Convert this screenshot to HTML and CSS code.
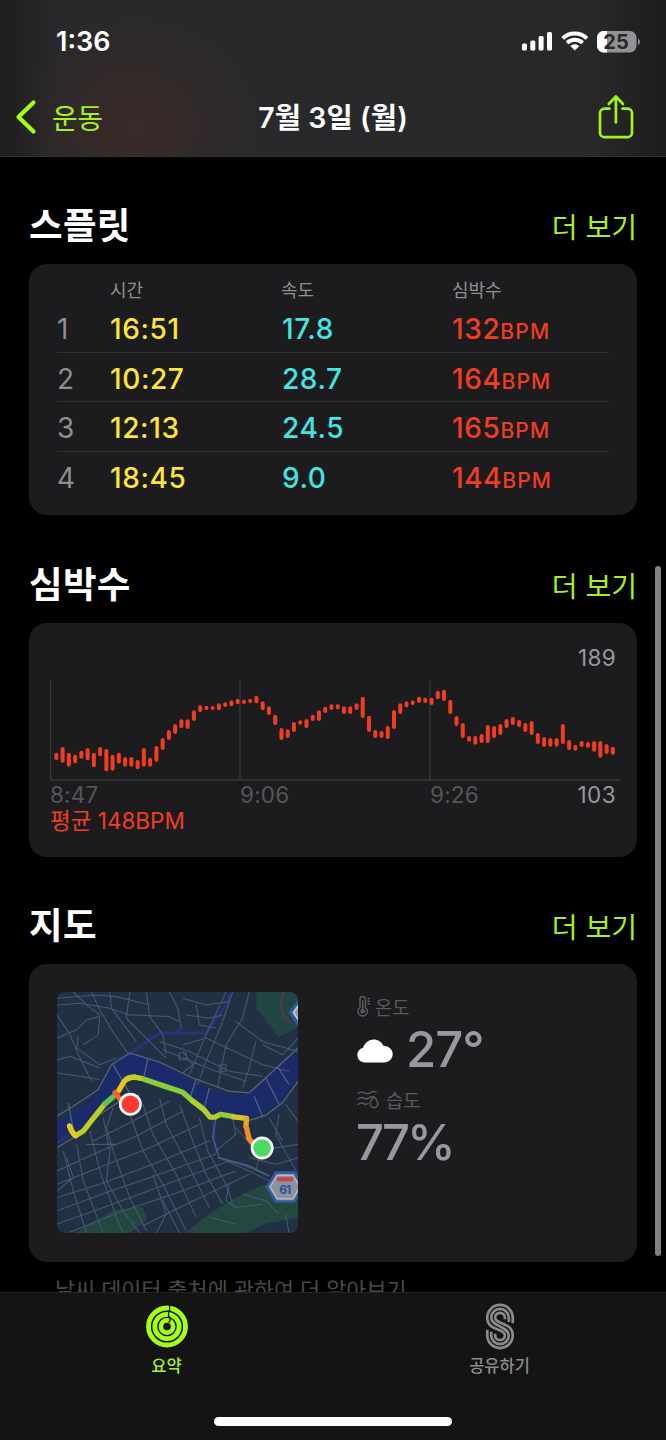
FILE: index.html
```
<!DOCTYPE html>
<html lang="ko">
<head>
<meta charset="utf-8">
<title>운동 요약</title>
<link rel="stylesheet" href="styles.css">
</head>
<body>
<div class="phone">
  <header class="top">
    <div class="status">
      <span class="clock">1:36</span>
      <svg class="status-icons" width="122" height="24" viewBox="0 0 122 24">
        <g fill="#fff">
          <rect x="2" y="14.500" width="5" height="7" rx="1.500"/>
          <rect x="10.300" y="11.500" width="5" height="10" rx="1.500"/>
          <rect x="18.600" y="7" width="5" height="14.500" rx="1.500"/>
          <rect x="27" y="3" width="5" height="18.500" rx="1.500"/>
          <path d="M54.800 21.500l-4.500-4.500a6.400 6.400 0 0 1 9 0z"/>
        </g>
        <g fill="none" stroke="#fff" stroke-width="3.900">
          <path d="M42.700 9.300a17.500 17.500 0 0 1 24.200 0"/>
          <path d="M47 13.800a11.300 11.300 0 0 1 15.600 0"/>
        </g>
        <rect x="77" y="2" width="39.500" height="21.500" rx="6.500" fill="#939395"/>
        <path d="M87 2h-3.500a6.500 6.500 0 0 0-6.500 6.500v8.500a6.500 6.500 0 0 0 6.500 6.500h3.500z" fill="#fff"/>
        <path d="M118 9.300q4 3.500 0 7z" fill="#939395"/>
        <text x="96" y="20" class="battery">25</text>
      </svg>
    </div>
    <nav class="nav">
      <a class="back">
        <svg width="22" height="36" viewBox="0 0 22 36"><path d="M18.500 3.500L3.500 18l15 14.500" fill="none" stroke="#a6ff12" stroke-width="4.200" stroke-linecap="round" stroke-linejoin="round"/></svg>
        <span>운동</span>
      </a>
      <h1>7월 3일 (월)</h1>
      <svg class="share" width="36" height="46" viewBox="0 0 36 46" fill="none" stroke="#a6f11c" stroke-width="2.700" stroke-linecap="round" stroke-linejoin="round">
        <path d="M11.500 14.700H6.500a4.500 4.500 0 0 0-4.500 4.500v19.500a4.500 4.500 0 0 0 4.500 4.500h23a4.500 4.500 0 0 0 4.500-4.500V19.200a4.500 4.500 0 0 0-4.500-4.500H24.500M17.900 28.500V3M10.800 10L17.900 2.500 25 10"/>
      </svg>
    </nav>
  </header>

  <main class="content">
    <section>
      <div class="head"><h2>스플릿</h2><a>더 보기</a></div>
      <div class="card splits">
        <div class="row labels"><i></i><span>시간</span><span>속도</span><span>심박수</span></div>
        <div class="row"><i>1</i><span class="time">16:51</span><span class="speed">17.8</span><span class="heart">132<small>BPM</small></span></div>
        <div class="row"><i>2</i><span class="time">10:27</span><span class="speed">28.7</span><span class="heart">164<small>BPM</small></span></div>
        <div class="row"><i>3</i><span class="time">12:13</span><span class="speed">24.5</span><span class="heart">165<small>BPM</small></span></div>
        <div class="row"><i>4</i><span class="time">18:45</span><span class="speed">9.0</span><span class="heart">144<small>BPM</small></span></div>
      </div>
    </section>

    <section>
      <div class="head second"><h2>심박수</h2><a>더 보기</a></div>
      <div class="card pulse">
        <div class="max">189</div>
        <svg class="chart" width="570" height="100" viewBox="30 33 1710 300">
          <path d="M31.500 33V330M600 33V330M1170 33V330M30 330H1740" stroke="#38383b" stroke-width="4" fill="none"/>
          <path id="bars" stroke="#f23d20" stroke-width="12" stroke-linecap="round" fill="none"/>
        </svg>
        <div class="axis"><span>8:47</span><span>9:06</span><span>9:26</span><b>103</b></div>
        <div class="average">평균 148BPM</div>
      </div>
    </section>

    <section>
      <div class="head"><h2>지도</h2><a>더 보기</a></div>
      <div class="card place">
        <svg class="map" width="241" height="241" viewBox="21 21 726 726">
          <rect x="21" y="21" width="726" height="726" fill="#223044"/>
          <path d="M622 21V70L688 158 747 125V21z" fill="#214744"/>
          <path d="M75 747L190 678 280 668 292 708 240 747z" fill="#24483f"/>
          <path d="M405 747L480 690 560 640 640 603 747 590V700L650 720 590 747z" fill="#24483f"/>
          <path d="M21 410L70 385 140 330 185 250 225 215 255 207 330 235 400 275 480 315 540 330 600 330 640 300 700 235 747 205V280L700 345 650 385 600 402 540 395 480 390 420 345 380 325 300 290 240 285 205 320 160 365 100 440 21 470z" fill="#1b2a6b"/>
          <path d="M235 210L290 170 330 145H470L530 60 545 21M380 145L400 130M490 400L500 510M21 475L60 450" fill="none" stroke="#22357b" stroke-width="9"/>
          <g fill="none" stroke="#465875" stroke-width="3.200">
            <path d="M21 60L90 55 180 70 240 90 360 95 390 110M21 90L60 150 90 220 125 290M21 160L80 135 110 105 150 95M85 155L80 190 150 240 200 220M70 21L110 60 150 90 145 150 100 180M125 21L150 75 195 150 235 205M180 21L185 70 260 170M240 21L230 100 280 150 350 220M21 225L60 215 150 250M21 265L90 275 150 285M290 21L300 95 340 150 350 210M360 21L385 70 395 130M21 40L140 30 200 35 300 60"/>
            <path d="M530 21L470 150 420 270M550 21L520 110 470 230 445 300M600 21L580 100 530 180 505 310M400 180L470 160 640 240 720 260M330 170L420 200 540 260 640 275M340 195L500 260 590 290M620 170L600 250 580 310M560 110L640 170 747 200M400 40L470 60 540 50M410 90L480 100 520 90M400 200L430 240 400 265M440 60L450 120 500 130M640 180L700 210 747 160M510 240h20v20h-20zM390 205h20v20h-20z"/>
            <path d="M230 360L280 500 340 600 410 740M280 360L310 450 380 570 440 700M330 340L350 420 420 550 480 670M390 360L430 470 470 570 520 660M190 370L170 430 190 500 240 640 290 740M160 400L180 500 170 590 220 680 270 747M120 440L150 560 200 700 220 747M80 480L100 590 160 747M40 500L70 620 110 747M450 400L475 500 530 600 550 660"/>
            <path d="M21 560L130 510 270 450 400 380M21 600L160 545 300 490 450 420M21 640L150 600 310 540 480 470M21 680L170 625 330 570 500 510M21 720L190 660 350 600 540 530M60 745L220 680 370 630 560 560M280 725L390 670 600 570M130 470L230 420 360 350M110 480L200 480M50 520L70 580 21 620M340 650L390 747M310 570L350 690 320 747"/>
            <path d="M500 500L560 450 550 400M505 520L590 545 660 575M510 520L600 560 660 590M560 430L620 500 747 480M600 520L680 540 747 520M640 480L620 560M690 390L680 450 747 570M660 400L700 470M710 360L747 410M540 600L530 650 560 670 640 660M580 630L650 650 690 690M710 690L720 747M480 700L560 720"/>
          </g>
          <g fill="none" stroke="#50617f" stroke-width="4">
            <path d="M21 395L70 365 145 315 185 240 240 205 330 232 430 280 540 320 600 325 660 270 747 190"/>
            <path d="M190 240L260 360M295 220L280 290M440 285L420 345M480 310L465 370M615 335L640 395M650 280L690 360M685 245L720 300M55 355L75 460M21 490L70 460 150 390 210 350 270 330"/>
            <path d="M500 400L490 460 510 520 600 545 660 575M600 408L650 392 700 355 747 290"/>
          </g>
          <path d="M705 21Q690 50 700 80T725 110" fill="none" stroke="#55364e" stroke-width="7"/>
          <g fill="none" stroke-width="16" stroke-linecap="round" stroke-linejoin="round">
            <path d="M59 425Q65 445 77 454L100 440 130 402 165 358" stroke="#bdcf27"/>
            <path d="M59 425Q65 445 77 454" stroke="#e0ca22"/>
            <path d="M165 358L190 337" stroke="#5cc64e"/>
            <path d="M207 318L222 292Q232 277 255 277" stroke="#e7c51f"/>
            <path d="M232 283Q245 274 275 281" stroke="#c3cf28"/>
            <path d="M283 284L340 303 400 323 430 350 455 368" stroke="#8bcc39"/>
            <path d="M430 350L463 375 482 398 497 398 512 390" stroke="#b3cf2c"/>
            <path d="M514 390L550 396" stroke="#91cd39"/>
            <path d="M552 397L592 402" stroke="#d3c82b"/>
            <path d="M592 404L590 426" stroke="#eba522"/>
            <path d="M592 430L599 462 612 478" stroke="#f38d24"/>
            <path d="M196 324L214 348" stroke="#ef6526"/>
          </g>
          <circle cx="242" cy="359" r="30.500" fill="#ff3b30" stroke="#fff" stroke-width="8"/>
          <circle cx="639" cy="491" r="30.500" fill="#4cd964" stroke="#fff" stroke-width="8"/>
          <path d="M654 608L680 565H736L762 608 736 652H680z" fill="#8c919e" stroke="#325b9f" stroke-width="8" stroke-linejoin="round"/>
          <path d="M664 608L685 573H732L752 608 732 644H685z" fill="none" stroke="#c3c9d4" stroke-width="3"/>
          <rect x="684" y="579" width="48" height="12" rx="3" fill="#c9424a"/>
          <text x="707" y="629" class="route">61</text>
          <path d="M751 49L725 83 751 121" fill="#929daf" stroke="#325b9f" stroke-width="11"/>
          <path d="M751 57L733 83 751 110" fill="none" stroke="#d2d9e4" stroke-width="4"/>
        </svg>
        <div class="weather">
          <div class="metric-label">
            <svg width="14" height="22" viewBox="0 0 14 22" fill="none" stroke="#59595e" stroke-width="1.500">
              <path d="M3 12.500V4.200a2.700 2.700 0 0 1 5.400 0v8.300a4.700 4.700 0 1 1-5.400 0z"/><circle cx="5.700" cy="16.300" r="2.400" fill="#59595e" stroke="none"/><path d="M5.700 5v11M10.500 3.500H13M10.500 6.300H13M10.500 9.100H13"/>
            </svg>
            <span>온도</span>
          </div>
          <div class="value temp">
            <svg width="36" height="24" viewBox="0 0 36 24"><path d="M8 23.500a7.500 7.500 0 0 1-1.900-14.800C8 3.500 12 .5 16.800.5c4.200 0 7.800 2.400 9.600 6.200C31.500 6.600 35.700 10.300 35.700 15c0 4.800-3.700 8.500-8.500 8.500z" fill="#fff"/></svg>
            <span>27°</span>
          </div>
          <div class="metric-label humid">
            <svg width="22" height="19" viewBox="0 0 22 19" fill="none" stroke="#59595e" stroke-width="1.500" stroke-linecap="round" stroke-linejoin="round">
              <path d="M1 3.500q3-2.500 6-.8t6 .4q3-2.800 6-.8M1 9q3-2.500 5.500-1T12 8q1.500-1.300 3-1.600M1 14.500q3-2.500 5.500-1T11 13.500M17 6.500q3.800 4.700 3.800 7.300a3.800 3.800 0 0 1-7.600 0q0-2.600 3.800-7.300z"/>
            </svg>
            <span>습도</span>
          </div>
          <div class="value percent">77%</div>
        </div>
      </div>
      <p class="source">날씨 데이터 출처에 관하여 더 알아보기</p>
    </section>
    <div class="scrollbar"></div>
  </main>

  <footer class="tabs">
    <div class="tab-row">
      <a class="tab active">
        <svg width="42" height="46" viewBox="0 0 42 46">
          <g fill="none" stroke="#a6ff12">
            <circle cx="21" cy="23" r="18.500" stroke-width="4.800"/>
            <circle cx="21" cy="23" r="12.200" stroke-width="4.800"/>
            <circle cx="21" cy="23" r="6.100" stroke-width="4.600"/>
          </g>
          <path d="M23.600 1V7L22.600 8V12.500L24 14V17.500L22.500 19" fill="none" stroke="#141414" stroke-width="1.300"/>
        </svg>
        <span>요약</span>
      </a>
      <a class="tab">
        <svg width="30" height="48" viewBox="132 36 90 144" fill="none" stroke="#8b8b8d" stroke-width="8.300">
          <path d="M216 98V81A39 39 0 0 0 138 81C138 122 192 114 192 135A15 15 0 0 1 162 135V130"/>
          <path d="M204 94V81A27 27 0 0 0 150 81C150 108 204 108 204 135A27 27 0 0 1 150 135V124"/>
          <path d="M192 86V81A15 15 0 0 0 162 81C162 102 216 94 216 135A39 39 0 0 1 138 135V118"/>
        </svg>
        <span>공유하기</span>
      </a>
    </div>
    <div class="home"></div>
  </footer>
</div>
<script src="chart.js"></script>
</body>
</html>
```
FILE: chart.js
```
// Low and high reading of each heart rate sample, in chart units.
const samples = [
  [248,270],[231,278],[248,290],[254,280],[242,266],[234,271],[248,292],[231,259],[237,304],[254,302],
  [248,281],[261,290],[261,290],[270,298],[234,290],[263,290],[228,275],[204,240],[180,210],[162,192],
  [148,174],[148,177],[121,153],[106,126],[107,120],[108,120],[100,121],[97,111],[91,109],[86,103],
  [89,102],[86,99],[77,100],[94,121],[109,135],[134,165],[174,210],[178,204],[156,186],[151,164],
  [147,174],[134,153],[121,153],[110,129],[103,120],[103,118],[109,132],[109,132],[100,120],[80,144],
  [137,186],[180,204],[183,204],[168,207],[120,177],[100,132],[94,112],[91,105],[80,99],[83,99],
  [83,105],[62,88],[59,93],[89,132],[138,168],[159,204],[198,215],[198,224],[192,219],[165,219],
  [168,204],[162,195],[147,174],[141,165],[150,171],[159,186],[153,195],[189,222],[201,231],[204,230],
  [204,230],[162,222],[210,240],[225,242],[213,231],[216,233],[213,245],[213,263],[222,252],[230,254]
];
const step = 18.76;
document.getElementById('bars').setAttribute('d', samples
  .map(([top, bottom], i) => `M${(49 + i * step).toFixed(1)} ${top + 6}V${bottom - 6}`)
  .join(''));
```
FILE: styles.css
```
* { box-sizing: border-box; }
body {
  margin: 0;
  background: #000;
  color: #fff;
  font-family: Inter, "Noto Sans CJK KR", sans-serif;
}
h1, h2, p { margin: 0; }
i { font-style: normal; }
.phone {
  width: 666px;
  height: 1440px;
  display: flex;
  flex-direction: column;
  overflow: hidden;
}
.top {
  height: 157px;
  flex: none;
  background:
    radial-gradient(ellipse 125px 110px at 135px 125px, rgba(70, 42, 38, .6), transparent),
    linear-gradient(90deg, #1e1e1f, #29292b 9%, #29292b 88%, #1d1d1e);
  border-bottom: 1px solid #323234;
}
.status {
  height: 82px;
  padding: 0 26px 0 56px;
  display: flex;
  align-items: center;
  justify-content: space-between;
}
.clock { font-size: 27px; font-weight: 600; letter-spacing: 0; }
.status-icons { margin-right: -2px; }
.battery { font: 700 20px Inter, sans-serif; fill: #29292b; text-anchor: middle; }
.nav {
  height: 70px;
  padding: 0 32px 0 15px;
  display: grid;
  grid-template-columns: 1fr auto 1fr;
  align-items: center;
}
.back { display: flex; align-items: center; gap: 15px; color: #a6f11c; font-size: 28px; letter-spacing: -.5px; padding-bottom: 1px; }
.nav h1 { font-size: 28.500px; font-weight: 600; letter-spacing: .1px; padding: 0 0 3px 17px; }
.share { justify-self: end; }

.content {
  flex: 1;
  min-height: 0;
  position: relative;
  overflow: hidden;
  padding: 0 29px;
}
.head {
  height: 107px;
  padding-bottom: 11px;
  display: flex;
  align-items: flex-end;
  justify-content: space-between;
}
.head.second { height: 108px; }
.head h2 { font-size: 36.500px; font-weight: 700; line-height: 54px; letter-spacing: .3px; }
.head a { font-size: 28px; line-height: 50px; color: #a6f11c; }
.card { background: #1c1c1e; border-radius: 18px; }

.splits { height: 251px; padding: 12px 28px 0; }
.row {
  height: 49.700px;
  padding-top: 3px;
  display: grid;
  grid-template-columns: 53px 171px 171px 1fr;
  align-items: center;
  font-size: 28px;
  border-bottom: 1.500px solid #303032;
}
.row:last-child { border: 0; }
.labels { height: 27px; padding: 0 0 3px; border: 0; font-size: 18px; color: #8e8e93; }
.row i { color: #8e8e93; }
.time { color: #ffe534; }
.speed { color: #41e5e1; }
.heart { color: #f23d20; }
.row:not(.labels) span { font-weight: 500; letter-spacing: .6px; }
.row .speed { padding-left: 1px; }
.row.labels .speed { padding-left: 0; }
.row small { font-size: 21px; letter-spacing: 1.200px; }

.pulse { height: 234px; padding: 20px 18px 0 21px; }
.max { height: 38px; font-size: 22.500px; line-height: 30px; text-align: right; padding-right: 3px; letter-spacing: .3px; color: #98989e; }
.chart { display: block; }
.axis {
  height: 26px;
  display: grid;
  grid-template-columns: 190px 190px 1fr auto;
  align-items: center;
  font-size: 22.500px;
  letter-spacing: .2px;
  color: #55555a;
  padding-right: 3px;
}
.axis b { font-weight: 400; letter-spacing: .4px; color: #98989e; }
.average { font-size: 22.500px; line-height: 28px; color: #f23d20; }

.place { height: 298px; padding: 28px; display: flex; gap: 59px; }
.map { border-radius: 8px; flex: none; }
.route { font: 700 36px Inter, sans-serif; fill: #2b5491; text-anchor: middle; letter-spacing: -3px; }
.weather { padding-top: 0; }
.metric-label { height: 28px; display: flex; align-items: center; gap: 4px; font-size: 18.800px; color: #59595e; }
.humid { gap: 7px; }
.value { height: 65px; line-height: 60px; font-size: 49px; font-weight: 500; letter-spacing: -1px; color: #98989e; }
.percent { letter-spacing: -3px; margin-left: -1px; }
.temp { display: flex; gap: 13px; }
.temp svg { margin-top: 19px; }
.source { padding-left: 26px; font-size: 21.800px; line-height: 32px; margin-top: 12px; color: #48484b; white-space: nowrap; }
.scrollbar { position: absolute; right: 5px; top: 409px; width: 6px; height: 690px; border-radius: 3px; background: #818181; }

.tabs {
  height: 148px;
  flex: none;
  background: #141414;
  border-top: 1px solid #242425;
  display: flex;
  flex-direction: column;
  align-items: center;
  justify-content: space-between;
  padding: 10px 0 14px;
}
.tab-row { align-self: stretch; display: grid; grid-template-columns: 1fr 1fr; }
.tab { display: flex; flex-direction: column; align-items: center; font-size: 16.500px; line-height: 24px; color: #8b8b8d; font-weight: 500; }
.tab svg { height: 47px; margin-bottom: 4px; }
.active { color: #a6f11c; }
.home { width: 238px; height: 9px; border-radius: 5px; background: #fff; }
```
